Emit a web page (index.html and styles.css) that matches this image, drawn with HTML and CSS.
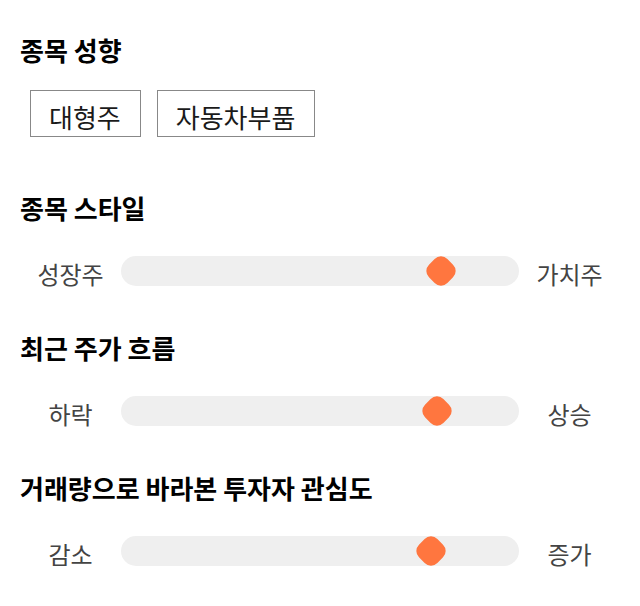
FILE: index.html
```html
<!DOCTYPE html>
<html>
<head>
    <title>종목 분석</title>
    <link rel="stylesheet" href="styles.css">
</head>
<body>
    <div class="page">
        <div class="section">
            <h2 class="section-title">종목 성향</h2>
            <div class="tags">
                <span class="tag">대형주</span>
                <span class="tag">자동차부품</span>
            </div>
        </div>

        <div class="section">
            <h2 class="section-title">종목 스타일</h2>
            <div class="slider-row">
                <span class="slider-label">성장주</span>
                <div class="track">
                    <div class="thumb" style="left: 80.4%"></div>
                </div>
                <span class="slider-label">가치주</span>
            </div>
        </div>

        <div class="section">
            <h2 class="section-title">최근 주가 흐름</h2>
            <div class="slider-row">
                <span class="slider-label">하락</span>
                <div class="track">
                    <div class="thumb" style="left: 79.4%"></div>
                </div>
                <span class="slider-label">상승</span>
            </div>
        </div>

        <div class="section">
            <h2 class="section-title">거래량으로 바라본 투자자 관심도</h2>
            <div class="slider-row">
                <span class="slider-label">감소</span>
                <div class="track">
                    <div class="thumb" style="left: 77.9%"></div>
                </div>
                <span class="slider-label">증가</span>
            </div>
        </div>
    </div>
</body>
</html>
```

FILE: styles.css
```css
body {
    margin: 0;
    background: #ffffff;
    font-family: "Noto Sans CJK KR", "Noto Sans", sans-serif;
    color: #111;
}

.page {
    padding: 35px 20px 0 20px;
}

.section {
    margin-bottom: 47px;
}

.section:first-child {
    margin-bottom: 56px;
}

.section-title {
    margin: 0 0 33px 0;
    font-size: 26px;
    line-height: 30px;
    font-weight: bold;
    color: #000;
}

.section:first-child .section-title {
    margin-bottom: 25px;
}

.tags {
    display: flex;
    gap: 16px;
    padding-left: 10px;
}

.tag {
    display: flex;
    align-items: center;
    height: 47px;
    box-sizing: border-box;
    padding: 6px 19px 0 18px;
    border: 1px solid #888;
    font-size: 26px;
    color: #1a1a1a;
}

.slider-row {
    display: flex;
    align-items: center;
    height: 30px;
}

.slider-label {
    width: 101px;
    text-align: center;
    font-size: 24px;
    line-height: 30px;
    padding-top: 6px;
    color: #444;
}

.track {
    position: relative;
    width: 398px;
    height: 30px;
    background: #efefef;
    border-radius: 15px;
}

.thumb {
    position: absolute;
    top: 50%;
    width: 26px;
    height: 26px;
    background: #ff763f;
    border-radius: 9px;
    transform: translate(-50%, -50%) rotate(45deg);
}
```
